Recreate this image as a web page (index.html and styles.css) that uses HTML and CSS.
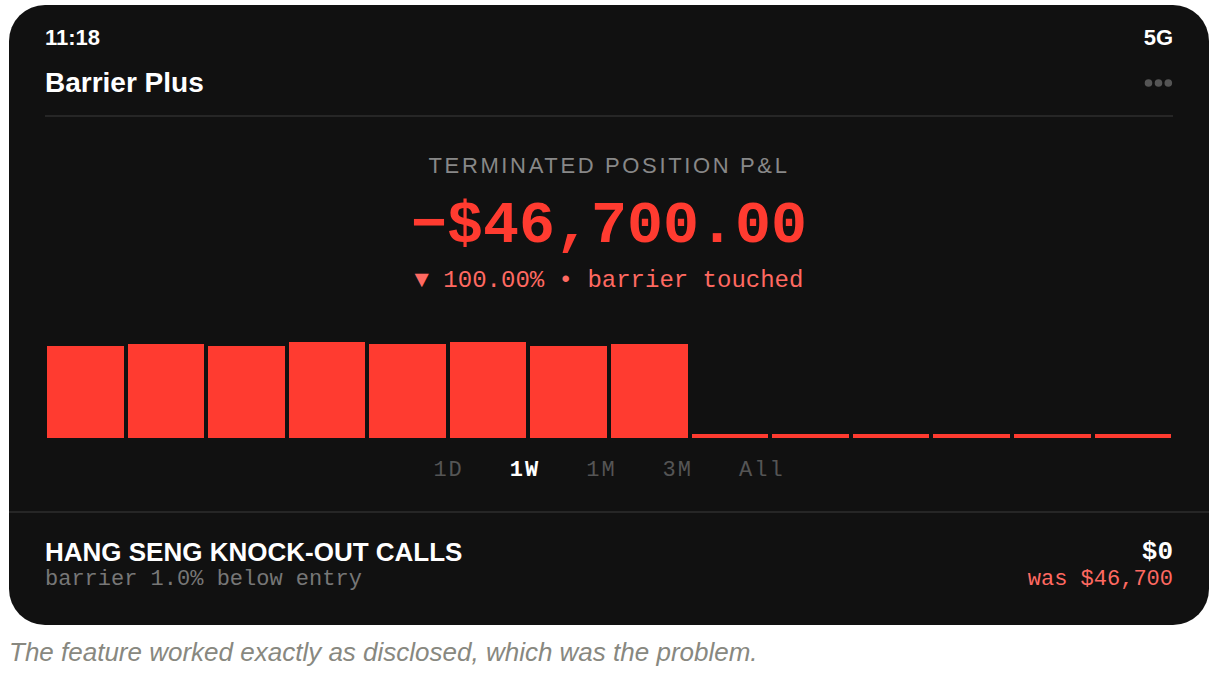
FILE: index.html
```html
<!DOCTYPE html>
<html lang="en">
<head>
<meta charset="utf-8">
<title>Barrier Plus</title>
<link rel="stylesheet" href="styles.css">
</head>
<body>
<figure class="figure">
  <div class="phone">
    <div class="status"><span>11:18</span><span>5G</span></div>
    <header class="header">
      <h1 class="title">Barrier Plus</h1>
      <button class="more" type="button" aria-label="More">
        <svg width="29" height="8" viewBox="0 0 29 8" fill="currentColor"><circle cx="4.5" cy="4" r="3.8"/><circle cx="14.5" cy="4" r="3.8"/><circle cx="24.3" cy="4" r="3.8"/></svg>
      </button>
    </header>
    <section class="summary">
      <div class="label">TERMINATED POSITION P&amp;L</div>
      <div class="amount">−$46,700.00</div>
      <div class="change">▼ 100.00% • barrier touched</div>
    </section>
    <div class="chart">
      <div class="bar" style="height:92px"></div>
      <div class="bar" style="height:94px"></div>
      <div class="bar" style="height:92px"></div>
      <div class="bar" style="height:96px"></div>
      <div class="bar" style="height:94px"></div>
      <div class="bar" style="height:96px"></div>
      <div class="bar" style="height:92px"></div>
      <div class="bar" style="height:94px"></div>
      <div class="bar" style="height:4px"></div>
      <div class="bar" style="height:4px"></div>
      <div class="bar" style="height:4px"></div>
      <div class="bar" style="height:4px"></div>
      <div class="bar" style="height:4px"></div>
      <div class="bar" style="height:4px"></div>
    </div>
    <nav class="ranges">
      <button class="range" type="button">1D</button>
      <button class="range active" type="button">1W</button>
      <button class="range" type="button">1M</button>
      <button class="range" type="button">3M</button>
      <button class="range" type="button">All</button>
    </nav>
    <section class="holding">
      <div>
        <div class="name">HANG SENG KNOCK-OUT CALLS</div>
        <div class="note">barrier 1.0% below entry</div>
      </div>
      <div class="values">
        <div class="value">$0</div>
        <div class="was">was $46,700</div>
      </div>
    </section>
  </div>
  <figcaption class="caption">The feature worked exactly as disclosed, which was the problem.</figcaption>
</figure>
</body>
</html>
```

FILE: styles.css
```css
* { box-sizing: border-box; }
body {
  margin: 0;
  background: #fff;
  font-family: "Liberation Sans", Arial, sans-serif;
}
.figure { margin: 5px 7px 0 9px; }
.phone {
  background: #111;
  color: #fff;
  border-radius: 36px;
  overflow: hidden;
}
.status {
  display: flex;
  justify-content: space-between;
  padding: 20px 36px 0;
  font-size: 22px;
  font-weight: 700;
  line-height: 26px;
}
.header {
  display: flex;
  justify-content: space-between;
  align-items: center;
  margin: 0 36px;
  padding: 14px 0 14px;
  border-bottom: 2px solid #262626;
}
.title { margin: 0; font-size: 28px; line-height: 36px; }
button { border: 0; padding: 0; background: none; cursor: pointer; }
.more { display: flex; color: #555; }
.summary {
  padding: 34px 36px 0;
  text-align: center;
}
.label {
  color: #888;
  font-size: 22px;
  line-height: 30px;
  letter-spacing: 0.12em;
}
.amount, .change, .range, .note, .value, .was {
  font-family: "Liberation Mono", "Courier New", monospace;
}
.amount {
  padding-top: 4px;
  color: #ff3b30;
  font-size: 60px;
  font-weight: 700;
  line-height: 82px;
}
.change {
  color: #ff6961;
  font-size: 24px;
  line-height: 28px;
}
.chart {
  display: flex;
  align-items: flex-end;
  gap: 4px;
  height: 96px;
  margin: 47px 38px 0;
}
.bar { flex: 1; background: #ff3b30; }
.ranges {
  display: flex;
  justify-content: center;
  gap: 46px;
  padding: 19px 36px 27px;
}
.range { color: #555; font-size: 22px; line-height: 27px; letter-spacing: 2px; }
.range.active { color: #fff; font-weight: 700; }
.holding {
  display: flex;
  justify-content: space-between;
  padding: 24px 36px 32px;
  border-top: 2px solid #262626;
}
.name { font-size: 26px; font-weight: 700; line-height: 30px; }
.note { color: #777; font-size: 22px; line-height: 26px; }
.values { text-align: right; }
.value { font-size: 26px; font-weight: 700; line-height: 30px; }
.was { color: #ff6961; font-size: 22px; line-height: 26px; }
.caption {
  margin-top: 12px;
  color: #888880;
  font-size: 26px;
  font-style: italic;
  line-height: 30px;
}
```
